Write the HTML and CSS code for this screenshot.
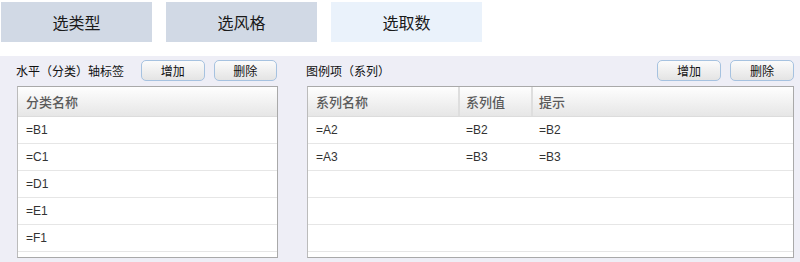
FILE: index.html
```html
<!DOCTYPE html>
<html lang="zh-CN">
<head>
    <meta charset="UTF-8">
    <title>选取数</title>
    <link rel="stylesheet" href="styles.css">
</head>
<body>

    <!-- 步骤标签 -->
    <div class="steps">
        <div class="step">选类型</div>
        <div class="step">选风格</div>
        <div class="step active">选取数</div>
    </div>

    <div class="panel">
        <!-- 分类轴 -->
        <div class="group group-left">
            <div class="toolbar">
                <span class="label">水平（分类）轴标签</span>
                <button class="btn">增加</button>
                <button class="btn">删除</button>
            </div>
            <div class="grid">
                <div class="row head cols-1">
                    <div class="cell">分类名称</div>
                </div>
                <div class="row cols-1"><div class="cell">=B1</div></div>
                <div class="row cols-1"><div class="cell">=C1</div></div>
                <div class="row cols-1"><div class="cell">=D1</div></div>
                <div class="row cols-1"><div class="cell">=E1</div></div>
                <div class="row cols-1"><div class="cell">=F1</div></div>
                <div class="row cols-1"><div class="cell"></div></div>
            </div>
        </div>

        <!-- 系列 -->
        <div class="group group-right">
            <div class="toolbar">
                <span class="label">图例项（系列）</span>
                <span class="spacer"></span>
                <button class="btn">增加</button>
                <button class="btn">删除</button>
            </div>
            <div class="grid">
                <div class="row head cols-3">
                    <div class="cell">系列名称</div>
                    <div class="cell">系列值</div>
                    <div class="cell">提示</div>
                </div>
                <div class="row cols-3"><div class="cell">=A2</div><div class="cell">=B2</div><div class="cell">=B2</div></div>
                <div class="row cols-3"><div class="cell">=A3</div><div class="cell">=B3</div><div class="cell">=B3</div></div>
                <div class="row cols-3"><div class="cell"></div><div class="cell"></div><div class="cell"></div></div>
                <div class="row cols-3"><div class="cell"></div><div class="cell"></div><div class="cell"></div></div>
                <div class="row cols-3"><div class="cell"></div><div class="cell"></div><div class="cell"></div></div>
                <div class="row cols-3"><div class="cell"></div><div class="cell"></div><div class="cell"></div></div>
            </div>
        </div>
    </div>

</body>
</html>
```

FILE: styles.css
```css
body {
    margin: 0;
    background-color: #fff;
    font-family: "Liberation Sans", "Noto Sans CJK SC", sans-serif;
    color: #222;
}

.steps {
    display: flex;
    gap: 14px;
    padding: 2px 0 0 1px;
}

.step {
    width: 151px;
    height: 40px;
    display: flex;
    align-items: center;
    justify-content: center;
    background-color: #d1d9e5;
    font-family: "Noto Sans CJK SC", sans-serif;
    font-size: 16px;
    color: #1a1a1a;
}

.step.active {
    background-color: #eaf2fb;
}

.panel {
    margin-top: 14px;
    height: 206px;
    box-sizing: border-box;
    background-color: #eeeef6;
    display: flex;
    gap: 29px;
    padding: 4px 6px 0 16px;
}

.group {
    display: flex;
    flex-direction: column;
}

.group-left {
    width: 261px;
}

.group-right {
    flex: 1;
}

.toolbar {
    display: flex;
    align-items: center;
    height: 21px;
    margin-bottom: 5px;
}

.label {
    font-family: "Noto Sans CJK SC", sans-serif;
    font-size: 12px;
    color: #111;
    margin-right: 17px;
    white-space: nowrap;
}

.spacer {
    flex: 1;
}

.btn {
    width: 64px;
    height: 21px;
    padding: 0;
    margin-right: 9px;
    border: 1px solid #a6c2e0;
    border-radius: 5px;
    background: linear-gradient(#fbfbfb, #e4e4e4);
    font-family: "Noto Sans CJK SC", sans-serif;
    font-size: 12px;
    color: #111;
    cursor: pointer;
}

.btn:last-child {
    margin-right: 0;
}

.grid {
    height: 172px;
    box-sizing: border-box;
    border: 1px solid #a9a9a9;
    border-left-color: #bbb;
    background-color: #fff;
    overflow: hidden;
}

.group-left .grid {
    margin-left: 1px;
    width: 261px;
}

.group-right .grid {
    margin-left: 1px;
}

.row {
    display: grid;
    height: 27px;
    box-sizing: border-box;
    border-bottom: 1px solid #e6e6e6;
    font-size: 12px;
    color: #333;
}

.cols-1 {
    grid-template-columns: 1fr;
}

.cols-3 {
    grid-template-columns: 150px 73px 1fr;
}

.cell {
    display: flex;
    align-items: center;
    padding-left: 8px;
}

.row.head {
    height: 30px;
    background: linear-gradient(#fefefe, #e6e6e6);
    border-bottom: 1px solid #dcdcdc;
    font-family: "Noto Sans CJK SC", sans-serif;
    font-size: 13px;
    font-weight: 500;
    color: #5a5a5a;
}

.row.head .cell + .cell {
    border-left: 2px solid #dedede;
    padding-left: 6px;
}
```
